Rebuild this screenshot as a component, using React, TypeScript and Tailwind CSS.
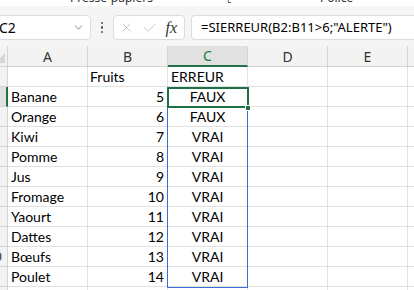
import { ChevronDown, X, Check } from "lucide-react"

const cellFont = { fontFamily: "Lato, 'Liberation Sans', sans-serif" }

// A, B, C contents; D, E, F empty
const data: [string, string, string][] = [
  ["", "Fruits", "ERREUR"],
  ["Banane", "5", "FAUX"],
  ["Orange", "6", "FAUX"],
  ["Kiwi", "7", "VRAI"],
  ["Pomme", "8", "VRAI"],
  ["Jus", "9", "VRAI"],
  ["Fromage", "10", "VRAI"],
  ["Yaourt", "11", "VRAI"],
  ["Dattes", "12", "VRAI"],
  ["Bœufs", "13", "VRAI"],
  ["Poulet", "14", "VRAI"],
  ["", "", ""],
]

const cols = ["A", "B", "C", "D", "E", "F"]

export default function App() {
  return (
    <div className="w-[414px] h-[290px] overflow-hidden bg-white text-black" style={{ fontFamily: "'Noto Sans', 'Liberation Sans', sans-serif" }}>
      {/* ribbon group labels, mostly cut off */}
      <div className="h-[6px] flex items-end overflow-hidden bg-white text-[12px] text-[#333] leading-[14px]">
        <span className="ml-[70px] mb-[1px]">Presse-papiers</span>
        <span className="ml-[74px] mb-[1px] text-[10px]">⌞</span>
        <span className="ml-[88px] mb-[1px]">Police</span>
      </div>

      {/* formula bar */}
      <div className="h-[40px] bg-[#f5f5f5] flex items-start pt-[9px]">
        <div className="ml-[-9px] w-[100px] h-[25px] bg-white border border-[#dcdcdc] rounded-[4px] flex items-center pl-[7px] pr-[5px]">
          <span className="text-[14px] flex-1">C2</span>
          <ChevronDown size={13} strokeWidth={1.5} className="text-[#666]" />
        </div>
        <div className="w-[22px] h-[25px] flex flex-col items-center justify-center gap-[2px]">
          <span className="w-[2.5px] h-[2.5px] rounded-full bg-[#555]" />
          <span className="w-[2.5px] h-[2.5px] rounded-full bg-[#555]" />
          <span className="w-[2.5px] h-[2.5px] rounded-full bg-[#555]" />
        </div>
        <div className="w-[72px] h-[25px] bg-white border border-[#dcdcdc] rounded-[4px] flex items-center justify-between px-[5px]">
          <X size={15} strokeWidth={1.2} className="text-[#b5b5b5]" />
          <Check size={16} strokeWidth={1.2} className="text-[#b5b5b5]" />
          <span className="text-[16px] italic text-[#333] pr-[2px]" style={{ fontFamily: "'Liberation Serif', serif" }}>fx</span>
        </div>
        <div className="ml-[6px] flex-1 h-[25px] bg-white border border-[#dcdcdc] border-r-0 rounded-l-[4px] flex items-center pl-[9px] text-[13px]">
          =SIERREUR(B2:B11&gt;6;"ALERTE")
        </div>
      </div>

      {/* grid */}
      <div className="relative" style={cellFont}>
        <div className="flex h-[21px] bg-[#f3f3f3] text-[14px] text-[#333]" style={{ fontFamily: "'Noto Sans', sans-serif" }}>
          <div className="ml-[-18px] w-[26px] shrink-0 border-r border-b border-[#d4d4d4] relative">
            <span className="absolute right-[2px] bottom-[3px] w-0 h-0 border-l-[10px] border-l-transparent border-b-[10px] border-b-[#d6d6d6]" />
          </div>
          {cols.map((c) =>
            c === "C" ? (
              <div key={c} className="w-[80px] shrink-0 flex items-center justify-center bg-[#e1e1e1] text-[#107c41] border-r border-[#d4d4d4] border-b-2 border-b-[#1e7145]">
                {c}
              </div>
            ) : (
              <div key={c} className="w-[80px] shrink-0 flex items-center justify-center border-r border-b border-[#d4d4d4]">
                {c}
              </div>
            )
          )}
        </div>

        {data.map((row, i) => (
          <div key={i} className="flex h-[20px] text-[14px]">
            <div
              className={
                "ml-[-18px] w-[26px] shrink-0 flex items-center justify-center text-[13px] text-[#333] border-b border-[#d4d4d4] " +
                (i === 1 ? "bg-[#e1e1e1] border-r-2 border-r-[#1e7145]" : "bg-[#f3f3f3] border-r border-r-[#d4d4d4]")
              }
              style={{ fontFamily: "'Noto Sans', sans-serif" }}
            >
              {i + 1}
            </div>
            <div className="w-[80px] shrink-0 border-r border-b border-[#e1e1e1] flex items-end pl-[3px] pb-[1px] leading-[16px]">
              {row[0]}
            </div>
            <div className={"w-[80px] shrink-0 border-r border-b border-[#e1e1e1] flex items-end pr-[3px] pb-[1px] leading-[16px] " + (i === 0 ? "justify-start pl-[2px]" : "justify-end")}>
              {row[1]}
            </div>
            <div className={"w-[80px] shrink-0 border-r border-b border-[#e1e1e1] flex items-end pb-[1px] leading-[16px] " + (i === 0 ? "justify-start pl-[3px]" : "justify-center")}>
              {row[2]}
            </div>
            <div className="w-[80px] shrink-0 border-r border-b border-[#e1e1e1]" />
            <div className="w-[80px] shrink-0 border-r border-b border-[#e1e1e1]" />
            <div className="w-[80px] shrink-0 border-r border-b border-[#e1e1e1]" />
          </div>
        ))}

        {/* spill range border */}
        <div className="absolute left-[167px] top-[41px] w-[81px] h-[201px] border border-[#3b6fd4] pointer-events-none" />
        {/* active cell */}
        <div className="absolute left-[167px] top-[41px] w-[82px] h-[21px] border-2 border-[#1e7145] pointer-events-none" />
        {/* fill handle */}
        <div className="absolute left-[245px] top-[59px] w-[6px] h-[6px] bg-[#1e7145] border border-white pointer-events-none" />
      </div>
    </div>
  )
}
